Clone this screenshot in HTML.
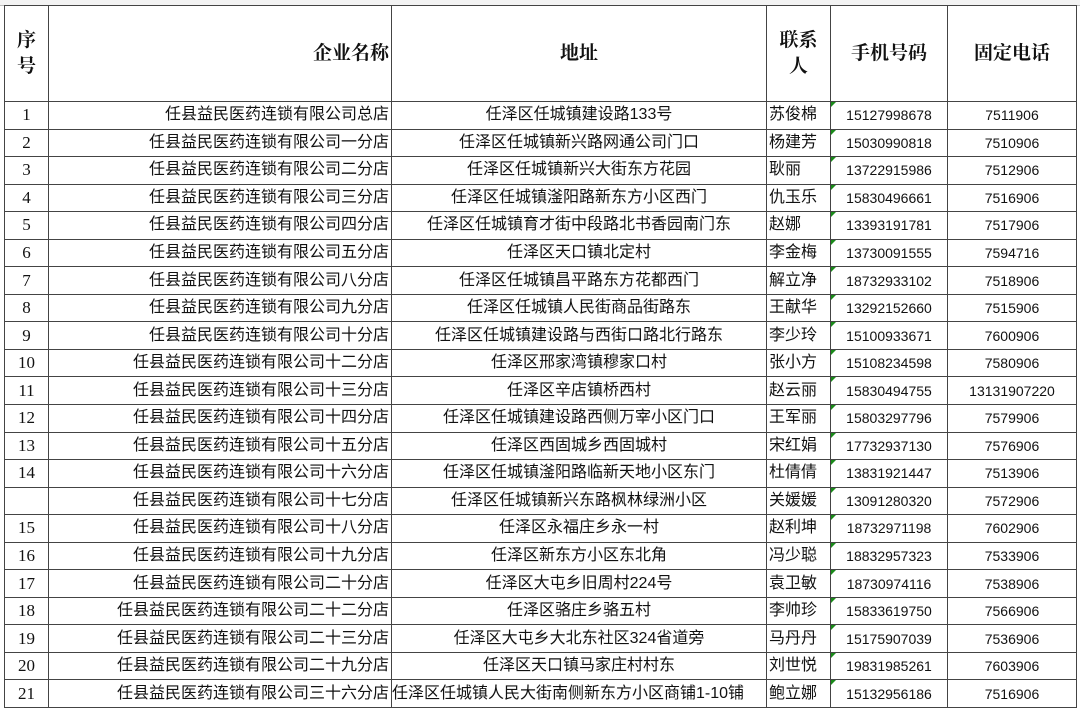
<!DOCTYPE html>
<html><head><meta charset="utf-8"><style>
html,body{margin:0;padding:0;background:#fff;width:1080px;height:710px;overflow:hidden}
.top{position:absolute;left:0;top:0;width:1080px;height:5px;background:#f3f3f3;border-bottom:1px solid #bbb}
table{position:absolute;left:4px;top:5px;border-collapse:collapse;table-layout:fixed;font-family:"Liberation Sans","Noto Sans CJK SC",sans-serif;font-size:16px;color:#111}
td{border:1px solid #444;padding:0 2px;white-space:nowrap;overflow:hidden;height:26.55px;line-height:26px}
tr.h td{height:95px;font-family:"Liberation Serif","Noto Serif CJK SC",serif;font-weight:bold;font-size:19px;line-height:26px}
td.n{text-align:center;font-family:"Liberation Serif",serif;font-size:17px}
td.c{text-align:right}
td.a{text-align:center}
td.p{text-align:left}
td.m{text-align:center;font-size:14px;position:relative}
td.m:before{content:"";position:absolute;left:0;top:0;border-top:5px solid #1a8a1a;border-right:5px solid transparent}
td.t{text-align:center;font-size:14px}
</style></head><body>
<div class="top"></div>
<table>
<colgroup><col style="width:44px"><col style="width:343px"><col style="width:375px"><col style="width:64px"><col style="width:117px"><col style="width:129px"></colgroup>
<tr class="h"><td class="a">序<br>号</td><td class="c">企业名称</td><td class="a">地址</td><td class="a">联系<br>人</td><td class="a">手机号码</td><td class="a">固定电话</td></tr>
<tr><td class="n">1</td><td class="c">任县益民医药连锁有限公司总店</td><td class="a">任泽区任城镇建设路133号</td><td class="p">苏俊棉</td><td class="m">15127998678</td><td class="t">7511906</td></tr>
<tr><td class="n">2</td><td class="c">任县益民医药连锁有限公司一分店</td><td class="a">任泽区任城镇新兴路网通公司门口</td><td class="p">杨建芳</td><td class="m">15030990818</td><td class="t">7510906</td></tr>
<tr><td class="n">3</td><td class="c">任县益民医药连锁有限公司二分店</td><td class="a">任泽区任城镇新兴大街东方花园</td><td class="p">耿丽</td><td class="m">13722915986</td><td class="t">7512906</td></tr>
<tr><td class="n">4</td><td class="c">任县益民医药连锁有限公司三分店</td><td class="a">任泽区任城镇滏阳路新东方小区西门</td><td class="p">仇玉乐</td><td class="m">15830496661</td><td class="t">7516906</td></tr>
<tr><td class="n">5</td><td class="c">任县益民医药连锁有限公司四分店</td><td class="a">任泽区任城镇育才街中段路北书香园南门东</td><td class="p">赵娜</td><td class="m">13393191781</td><td class="t">7517906</td></tr>
<tr><td class="n">6</td><td class="c">任县益民医药连锁有限公司五分店</td><td class="a">任泽区天口镇北定村</td><td class="p">李金梅</td><td class="m">13730091555</td><td class="t">7594716</td></tr>
<tr><td class="n">7</td><td class="c">任县益民医药连锁有限公司八分店</td><td class="a">任泽区任城镇昌平路东方花都西门</td><td class="p">解立净</td><td class="m">18732933102</td><td class="t">7518906</td></tr>
<tr><td class="n">8</td><td class="c">任县益民医药连锁有限公司九分店</td><td class="a">任泽区任城镇人民街商品街路东</td><td class="p">王献华</td><td class="m">13292152660</td><td class="t">7515906</td></tr>
<tr><td class="n">9</td><td class="c">任县益民医药连锁有限公司十分店</td><td class="a">任泽区任城镇建设路与西街口路北行路东</td><td class="p">李少玲</td><td class="m">15100933671</td><td class="t">7600906</td></tr>
<tr><td class="n">10</td><td class="c">任县益民医药连锁有限公司十二分店</td><td class="a">任泽区邢家湾镇穆家口村</td><td class="p">张小方</td><td class="m">15108234598</td><td class="t">7580906</td></tr>
<tr><td class="n">11</td><td class="c">任县益民医药连锁有限公司十三分店</td><td class="a">任泽区辛店镇桥西村</td><td class="p">赵云丽</td><td class="m">15830494755</td><td class="t">13131907220</td></tr>
<tr><td class="n">12</td><td class="c">任县益民医药连锁有限公司十四分店</td><td class="a">任泽区任城镇建设路西侧万宰小区门口</td><td class="p">王军丽</td><td class="m">15803297796</td><td class="t">7579906</td></tr>
<tr><td class="n">13</td><td class="c">任县益民医药连锁有限公司十五分店</td><td class="a">任泽区西固城乡西固城村</td><td class="p">宋红娟</td><td class="m">17732937130</td><td class="t">7576906</td></tr>
<tr><td class="n">14</td><td class="c">任县益民医药连锁有限公司十六分店</td><td class="a">任泽区任城镇滏阳路临新天地小区东门</td><td class="p">杜倩倩</td><td class="m">13831921447</td><td class="t">7513906</td></tr>
<tr><td class="n"></td><td class="c">任县益民医药连锁有限公司十七分店</td><td class="a">任泽区任城镇新兴东路枫林绿洲小区</td><td class="p">关媛媛</td><td class="m">13091280320</td><td class="t">7572906</td></tr>
<tr><td class="n">15</td><td class="c">任县益民医药连锁有限公司十八分店</td><td class="a">任泽区永福庄乡永一村</td><td class="p">赵利坤</td><td class="m">18732971198</td><td class="t">7602906</td></tr>
<tr><td class="n">16</td><td class="c">任县益民医药连锁有限公司十九分店</td><td class="a">任泽区新东方小区东北角</td><td class="p">冯少聪</td><td class="m">18832957323</td><td class="t">7533906</td></tr>
<tr><td class="n">17</td><td class="c">任县益民医药连锁有限公司二十分店</td><td class="a">任泽区大屯乡旧周村224号</td><td class="p">袁卫敏</td><td class="m">18730974116</td><td class="t">7538906</td></tr>
<tr><td class="n">18</td><td class="c">任县益民医药连锁有限公司二十二分店</td><td class="a">任泽区骆庄乡骆五村</td><td class="p">李帅珍</td><td class="m">15833619750</td><td class="t">7566906</td></tr>
<tr><td class="n">19</td><td class="c">任县益民医药连锁有限公司二十三分店</td><td class="a">任泽区大屯乡大北东社区324省道旁</td><td class="p">马丹丹</td><td class="m">15175907039</td><td class="t">7536906</td></tr>
<tr><td class="n">20</td><td class="c">任县益民医药连锁有限公司二十九分店</td><td class="a">任泽区天口镇马家庄村村东</td><td class="p">刘世悦</td><td class="m">19831985261</td><td class="t">7603906</td></tr>
<tr><td class="n">21</td><td class="c">任县益民医药连锁有限公司三十六分店</td><td class="p" style="padding:0">任泽区任城镇人民大街南侧新东方小区商铺1-10铺</td><td class="p">鲍立娜</td><td class="m">15132956186</td><td class="t">7516906</td></tr>
</table>
</body></html>
